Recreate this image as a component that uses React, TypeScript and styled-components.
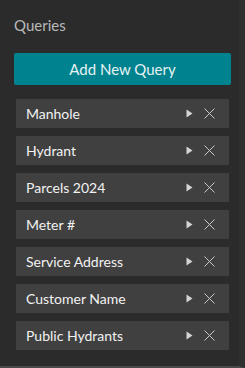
import * as React from 'react'
import styled, { createGlobalStyle } from 'styled-components'

const GlobalStyle = createGlobalStyle`
  html, body {
    margin: 0;
    padding: 0;
    background: #2b2b2b;
  }
  body {
    font-family: Lato, "Open Sans", sans-serif;
  }
`

const Panel = styled.div`
  width: 245px;
  height: 368px;
  box-sizing: border-box;
  padding: 15px 8px 0 14px;
  background: #2b2b2b;
  border-bottom: 2px solid #4a4a4a;
  border-right: 6px solid #2f2f2f;
  display: flex;
  flex-direction: column;
`

const Heading = styled.div`
  color: #b9b9b9;
  font-size: 15px;
  line-height: 20px;
  height: 20px;
`

const AddButton = styled.button`
  margin-top: 18px;
  height: 32px;
  width: 100%;
  border: none;
  border-radius: 2px;
  background: #00838f;
  color: #e6f2f3;
  font-family: inherit;
  font-size: 15px;
  cursor: pointer;
`

const List = styled.div`
  margin-top: 14px;
  padding: 0 2px;
  display: flex;
  flex-direction: column;
  gap: 8px;
`

const Row = styled.div`
  height: 29px;
  background: #404040;
  display: flex;
  align-items: center;
  padding: 0 14px 0 10px;
`

const Label = styled.span`
  flex: 1;
  color: #f2f2f2;
  font-size: 14px;
`

const IconButton = styled.span`
  display: flex;
  align-items: center;
  justify-content: center;
  margin-left: ${(p: { gap?: number }) => p.gap ?? 0}px;
`

const Play = () => (
  <svg width="7" height="9" viewBox="0 0 7 9">
    <path d="M0.5 0.5 L6.5 4.5 L0.5 8.5 Z" fill="#d4d4d4" />
  </svg>
)

const Close = () => (
  <svg width="11" height="11" viewBox="0 0 11 11">
    <path d="M0.5 0.5 L10.5 10.5 M10.5 0.5 L0.5 10.5" stroke="#c8c8c8" strokeWidth="1" />
  </svg>
)

const queries = [
  'Manhole',
  'Hydrant',
  'Parcels 2024',
  'Meter #',
  'Service Address',
  'Customer Name',
  'Public Hydrants',
]

export default function App() {
  return (
    <>
      <GlobalStyle />
      <Panel>
        <Heading>Queries</Heading>
        <AddButton>Add New Query</AddButton>
        <List>
          {queries.map(q => (
            <Row key={q}>
              <Label>{q}</Label>
              <IconButton>
                <Play />
              </IconButton>
              <IconButton gap={11}>
                <Close />
              </IconButton>
            </Row>
          ))}
        </List>
      </Panel>
    </>
  )
}
